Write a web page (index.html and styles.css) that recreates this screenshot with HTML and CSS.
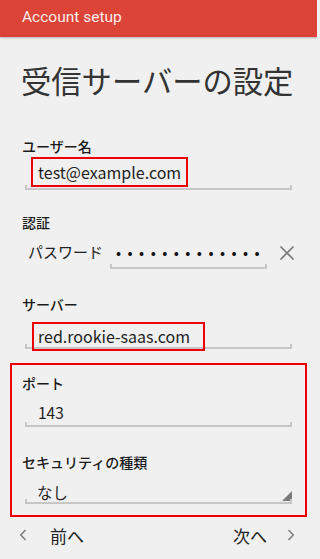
FILE: index.html
```html
<!DOCTYPE html>
<html lang="ja">
<head>
<meta charset="utf-8">
<title>Account setup</title>
<link rel="stylesheet" href="styles.css">
</head>
<body>
<header class="appbar">Account setup</header>
<h1 class="title">受信サーバーの設定</h1>
<main class="content">
  <section class="group">
    <div class="label label-user">ユーザー名</div>
    <div class="field field-user">
      <span class="value mark mark-user">test@example.com</span>
    </div>

    <div class="label label-auth">認証</div>
    <div class="pw-row">
      <span class="pw-label">パスワード</span>
      <span class="field pw-field"><span class="dots">•••••••••••••</span></span>
      <svg class="clear" width="16" height="16" viewBox="0 0 16 16"><path d="M1.5 1.5L14.5 14.5M14.5 1.5L1.5 14.5" stroke="#7a7a7a" stroke-width="1.7" fill="none"/></svg>
    </div>

    <div class="label label-server">サーバー</div>
    <div class="field field-server">
      <span class="value mark mark-server">red.rookie-saas.com</span>
    </div>
  </section>

  <section class="group boxed">
    <div class="label label-port">ポート</div>
    <div class="field field-port"><span class="plain">143</span></div>

    <div class="label label-sec">セキュリティの種類</div>
    <div class="field field-sec"><span class="plain">なし</span><span class="corner"></span></div>
  </section>
</main>
<footer class="nav">
  <div class="nav-btn">
    <svg class="chev" width="8" height="12" viewBox="0 0 8 12"><path d="M6.5 1L1.8 6L6.5 11" stroke="#808080" stroke-width="1.6" fill="none"/></svg>
    <span class="nav-text prev-text">前へ</span>
  </div>
  <div class="nav-btn">
    <span class="nav-text next-text">次へ</span>
    <svg class="chev" width="8" height="12" viewBox="0 0 8 12"><path d="M1.5 1L6.2 6L1.5 11" stroke="#808080" stroke-width="1.6" fill="none"/></svg>
  </div>
</footer>
</body>
</html>
```
FILE: styles.css
```css
* { box-sizing: border-box; }
html, body { margin: 0; padding: 0; }
body {
  width: 317px;
  height: 559px;
  overflow: hidden;
  background: #f0f0f0;
  font-family: "Noto Sans CJK JP", "Noto Sans", sans-serif;
  color: #1e1e1e;
}
.appbar {
  height: 37px;
  line-height: 35px;
  padding-left: 22px;
  background: #db4437;
  color: rgba(255, 255, 255, 0.92);
  font-family: Roboto, "Noto Sans", sans-serif;
  font-size: 15.5px;
  box-shadow: 0 1px 2px rgba(0, 0, 0, 0.25);
  position: relative;
}
.title {
  margin: 25px 0 0 0;
  padding-left: 21px;
  height: 36px;
  line-height: 36px;
  font-size: 30.3px;
  font-weight: normal;
  color: #333;
  white-space: nowrap;
}
.content {
  padding: 0 10px;
}
.group {
  padding: 0 12px;
}
.label {
  height: 18px;
  line-height: 18px;
  font-size: 14px;
  font-weight: 500;
  color: #1a1a1a;
}
.label-user { margin-top: 39px; }
.label-auth { margin-top: 23px; }
.label-server { margin-top: 26px; }
.field {
  position: relative;
  display: flex;
  align-items: flex-start;
  margin: 0 3px;
  border-bottom: 2px solid #c6c6c6;
}
.field::before, .field::after {
  content: "";
  position: absolute;
  bottom: -2px;
  width: 2px;
  height: 5px;
  background: #c6c6c6;
}
.field::before { left: 0; }
.field::after { right: 0; }
.value {
  font-size: 16px;
  color: #1e1e1e;
  white-space: nowrap;
}
.mark {
  border: 2px solid #ee0000;
}
.field-user {
  margin-top: 2px;
  height: 33px;
}
.mark-user {
  margin-left: 6px;
  height: 30px;
  line-height: 26px;
  padding: 0 8px 0 5px;
  width: 157px;
}
.pw-row {
  display: flex;
  align-items: flex-start;
  margin-top: 6px;
  height: 32px;
  padding-left: 6px;
}
.pw-label {
  flex: none;
  width: 82px;
  height: 30px;
  line-height: 30px;
  font-size: 15px;
  color: #222;
}
.pw-field {
  flex: none;
  margin: 0;
  width: 157px;
  height: 32px;
  padding-left: 6px;
  overflow: hidden;
}
.dots {
  line-height: 30px;
  font-size: 15px;
  letter-spacing: 6.45px;
  color: #111;
  white-space: nowrap;
}
.clear {
  flex: none;
  margin-left: 12px;
  margin-top: 8px;
}
.field-server {
  margin-top: 9px;
  height: 27px;
}
.mark-server {
  margin-left: 7px;
  width: 173px;
  height: 29px;
  line-height: 25px;
  padding-left: 4px;
}
.boxed {
  margin-top: 14px;
  border: 2px solid #ee0000;
  padding: 9px 10px 11px 10px;
}
.label-port { margin-top: 0; }
.label-sec { margin-top: 26px; }
.plain {
  font-size: 15.5px;
  color: #1e1e1e;
  white-space: nowrap;
}
.field-port {
  margin-top: 6px;
  height: 29px;
  padding: 2px 0 0 13px;
}
.field-port .plain { line-height: 25px; }
.field-sec {
  margin-top: 8px;
  height: 25px;
  padding: 3px 0 0 12px;
}
.field-sec .plain { line-height: 20px; }
.corner {
  position: absolute;
  right: 0;
  bottom: 1px;
  width: 10px;
  height: 10px;
  background: #7a7a7a;
  clip-path: polygon(100% 0, 100% 100%, 0 100%);
}
.nav {
  height: 36px;
  display: flex;
  justify-content: space-between;
  align-items: center;
  padding: 0 22px 0 19px;
}
.nav-btn {
  display: flex;
  align-items: center;
}
.nav-text {
  font-size: 17px;
  color: #222;
}
.prev-text { margin-left: 23px; }
.next-text { margin-right: 20px; }
.chev { display: block; }
```
